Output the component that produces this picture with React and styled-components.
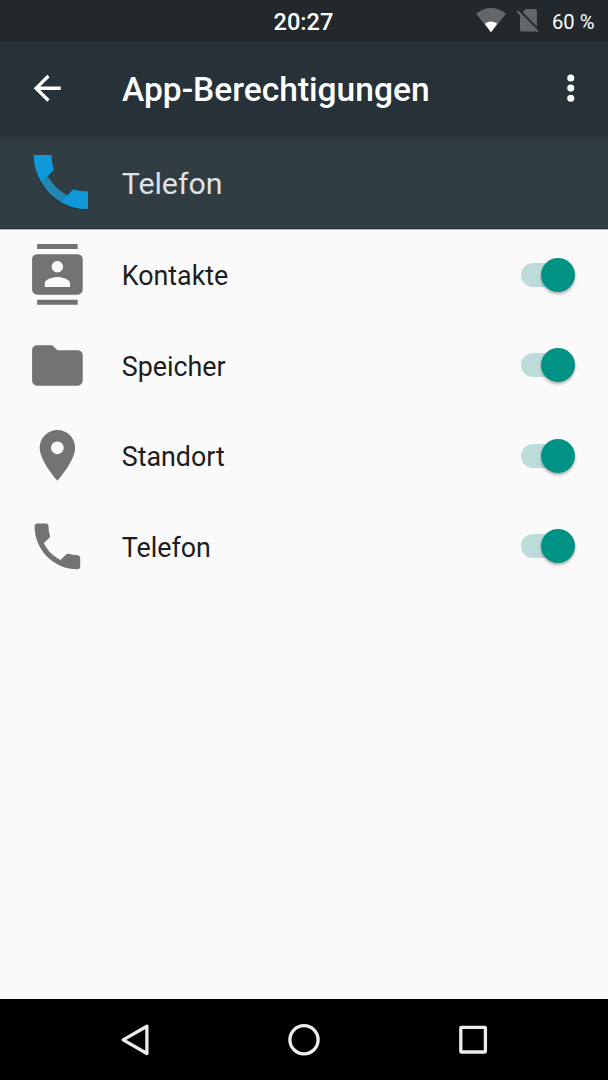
import React, {useState} from 'react';
import styled, {createGlobalStyle} from "styled-components"

const permissions = [
    {name: "Kontakte", icon: "M20 0H4v2h16V0zM4 24h16v-2H4v2zM20 4H4c-1.1 0-2 .9-2 2v12c0 1.1.9 2 2 2h16c1.1 0 2-.9 2-2V6c0-1.1-.9-2-2-2zm-8 2.75c1.24 0 2.25 1.01 2.25 2.25s-1.01 2.25-2.25 2.25S9.75 10.24 9.75 9 10.76 6.75 12 6.75zM17 17H7v-1.5c0-1.67 3.33-2.5 5-2.5s5 .83 5 2.5V17z"},
    {name: "Speicher", icon: "M10 4H4c-1.1 0-1.99.9-1.99 2L2 18c0 1.1.9 2 2 2h16c1.1 0 2-.9 2-2V8c0-1.1-.9-2-2-2h-8l-2-2z"},
    {name: "Standort", icon: "M12 2C8.13 2 5 5.13 5 9c0 5.25 7 13 7 13s7-7.75 7-13c0-3.87-3.13-7-7-7zm0 9.5c-1.38 0-2.5-1.12-2.5-2.5s1.12-2.5 2.5-2.5 2.5 1.12 2.5 2.5-1.12 2.5-2.5 2.5z"},
    {name: "Telefon", icon: "M6.62 10.79c1.44 2.83 3.76 5.14 6.59 6.59l2.2-2.2c.27-.27.67-.36 1.02-.24 1.12.37 2.33.57 3.57.57.55 0 1 .45 1 1V20c0 .55-.45 1-1 1-9.39 0-17-7.61-17-17 0-.55.45-1 1-1h3.5c.55 0 1 .45 1 1 0 1.25.2 2.45.57 3.57.11.35.03.74-.25 1.02l-2.2 2.2z"},
]

function App() {

    const [enabled, setEnabled] = useState({
        Kontakte: true,
        Speicher: true,
        Standort: true,
        Telefon: true
    })

    function toggle(name) {
        setEnabled({...enabled, [name]: !enabled[name]});
    }

    return (
        <>
            <GlobalStyle/>
            <Screen>
                <StatusBar>
                    <Clock>20:27</Clock>
                    <StatusIcons>
                        <svg width="30" height="25" viewBox="0 0 30 25">
                            <path d="M0 5.7C9-1.9 21-1.9 30 5.7L15 24.3z" fill="#646768"/>
                            <path d="M8.7 15.7Q15 11.3 21.3 15.7L15 24.3z" fill="#fff"/>
                        </svg>
                        <svg width="23" height="25" viewBox="0 0 23 25">
                            <path d="M9.6 1.1h9.6q1.7 0 1.7 1.7v15.7L6.9 4.5l1.7-2.7q.4-.7 1-.7z" fill="#646768"/>
                            <path d="M4 6.5L20.3 22.8q-.4.6-1.2.6H5.7q-1.7 0-1.7-1.7z" fill="#646768"/>
                            <path d="M1.2 3L21.8 23.6" stroke="#646768" strokeWidth="2.2"/>
                        </svg>
                    </StatusIcons>
                    <Battery>60 %</Battery>
                </StatusBar>
                <AppBar>
                    <IconButton aria-label="Zurück">
                        <Icon $size={40.5} viewBox="0 0 24 24">
                            <path d="M20 11H7.83l5.59-5.59L12 4l-8 8 8 8 1.41-1.41L7.83 13H20v-2z"/>
                        </Icon>
                    </IconButton>
                    <h1>App-Berechtigungen</h1>
                    <IconButton aria-label="Mehr">
                        <Icon $size={40.5} viewBox="0 0 24 24">
                            <circle cx="12.3" cy="5.9" r="2.1"/>
                            <circle cx="12.3" cy="11.9" r="2.1"/>
                            <circle cx="12.3" cy="17.9" r="2.1"/>
                        </Icon>
                    </IconButton>
                </AppBar>
                <AppHeader>
                    <svg width="56" height="57" viewBox="-1 -1 168 171">
                        <path d="M4 5H52Q55 5 55 8Q55 30 61 46Q62 50 59 53L43 69Q65 107 102 126L117 111Q120 108 124 109Q140 114 160 114Q164 114 164 118V165Q164 168 160 168C70 168 1 95 1 8Q1 5 4 5z" fill="#1b2b31" opacity="0.6" transform="translate(0 2)"/>
                        <path d="M43 69Q65 107 102 126L82 146Q45 125 24 87z" fill="#2487b3"/>
                        <path d="M4 5H52Q55 5 55 8Q55 30 61 46Q62 50 59 53L43 69L24 87Q1 48 1 8Q1 5 4 5z" fill="#0f99d8"/>
                        <path d="M102 126L117 111Q120 108 124 109Q140 114 160 114Q164 114 164 118V165Q164 168 160 168Q119 168 82 146z" fill="#0f99d8"/>
                    </svg>
                    <h2>Telefon</h2>
                </AppHeader>
                <List>
                    {permissions.map(({name, icon}) => (
                        <Row key={name}>
                            <Icon $size={60.8} $color="#737373" viewBox="0 0 24 24">
                                <path d={icon}/>
                            </Icon>
                            <span>{name}</span>
                            <Switch role="switch" aria-label={name} aria-checked={enabled[name]} $on={enabled[name]} onClick={() => toggle(name)}/>
                        </Row>
                    ))}
                </List>
                <NavBar>
                    <svg width="34" height="34" viewBox="0 0 34 34">
                        <path d="M5.2 16.9L28.9 3.2V30.5z"/>
                    </svg>
                    <svg width="34" height="34" viewBox="0 0 34 34">
                        <circle cx="17" cy="16.8" r="14.1"/>
                    </svg>
                    <svg width="34" height="34" viewBox="0 0 34 34">
                        <rect x="4.8" y="4.4" width="24.6" height="24.6" rx="0.5"/>
                    </svg>
                </NavBar>
            </Screen>
        </>
    );
}

export default App;

const GlobalStyle = createGlobalStyle`
  body {
    margin: 0;
  }
  button {
    border: none;
    padding: 0;
    background: none;
    cursor: pointer;
  }
`;

const Screen = styled.div`
  width: 608px;
  height: 1080px;
  display: flex;
  flex-direction: column;
  overflow: hidden;
  background-color: #fafafa;
  font-family: Roboto, sans-serif;
`;

const StatusBar = styled.div`
  height: 41px;
  flex: none;
  display: grid;
  grid-template-columns: 273.5px 1fr auto auto;
  align-items: center;
  box-sizing: border-box;
  padding-right: 13.5px;
  background-color: #22282b;
  color: #fff;
`;

const Clock = styled.span`
  grid-column: 2;
  font-size: 23.6px;
  font-weight: 500;
  line-height: 41px;
  padding-top: 1px;
`;

const StatusIcons = styled.div`
  display: flex;
  gap: 10px;
  margin: 0 13.5px 2px 0;
`;

const Battery = styled.span`
  font-size: 20.2px;
  line-height: 41px;
  padding-top: 2px;
`;

const AppBar = styled.header`
  position: relative;
  height: 96px;
  flex: none;
  display: flex;
  align-items: center;
  box-sizing: border-box;
  padding: 0 17.3px 2px 27px;
  background-color: #273238;
  box-shadow: 0 1px 6px rgba(0, 0, 0, 0.18);

  h1 {
    flex: 1;
    margin: 0;
    padding: 2px 0 0 54.5px;
    color: #fff;
    font-size: 33.55px;
    font-weight: 500;
  }
`;

const IconButton = styled.button`
  display: flex;
  color: #fff;
`;

const Icon = styled.svg`
  width: ${({$size}) => $size}px;
  height: ${({$size}) => $size}px;
  flex: none;
  fill: ${({$color}) => $color || "currentColor"};
`;

const AppHeader = styled.div`
  height: 92px;
  flex: none;
  display: flex;
  align-items: center;
  box-sizing: border-box;
  padding-left: 33.4px;
  background-color: #303e44;
  box-shadow: inset 0 -1px #24333a;

  svg {
    margin-bottom: 3px;
  }
  h2 {
    margin: 0 0 0 32.4px;
    padding-top: 1px;
    color: #dfe1e2;
    font-size: 30.3px;
    font-weight: 400;
  }
`;

const List = styled.main`
  flex: 1;
  padding-top: 0.4px;
  box-shadow: inset 0 1px #b4b8ba;
`;

const Row = styled.div`
  height: 90.5px;
  display: flex;
  align-items: center;
  box-sizing: border-box;
  padding: 0 32.7px 0 27px;

  span {
    flex: 1;
    padding: 3px 0 0 33.9px;
    color: #1d1d1d;
    font-size: 26.85px;
  }
`;

const Switch = styled.button`
  width: 54px;
  height: 24px;
  display: flex;
  align-items: center;
  justify-content: ${({$on}) => $on ? "flex-end" : "flex-start"};
  border-radius: 12px;
  background-color: ${({$on}) => $on ? "#bddcd9" : "#b9b9b9"};

  &::before {
    content: "";
    width: 34px;
    height: 34px;
    flex: none;
    border-radius: 50%;
    background-color: ${({$on}) => $on ? "#009385" : "#f1f1f1"};
    box-shadow: 0 2px 3px rgba(0, 0, 0, 0.3);
  }
`;

const NavBar = styled.nav`
  height: 81px;
  flex: none;
  display: flex;
  align-items: center;
  justify-content: center;
  gap: 135px;
  background-color: #000;

  svg {
    fill: none;
    stroke: #eceded;
    stroke-width: 3.3px;
    stroke-linejoin: round;
  }
`;
